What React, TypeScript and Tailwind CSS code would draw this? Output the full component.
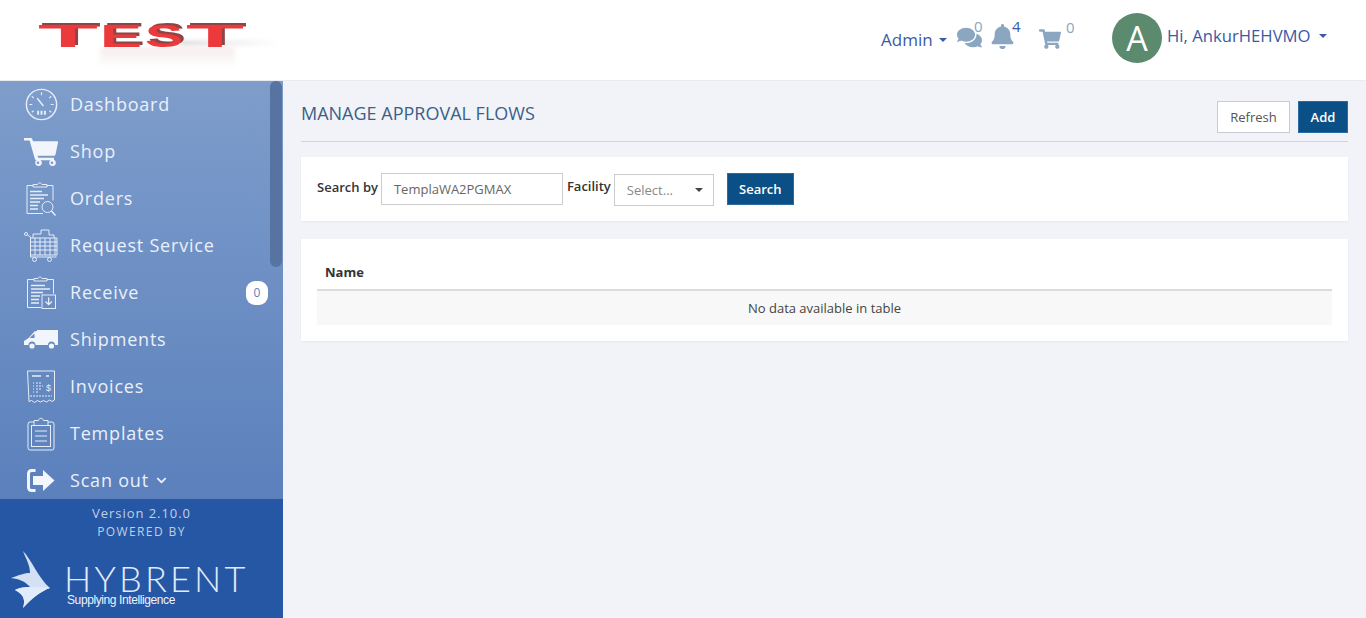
import React from "react";
import { FaComments, FaBell, FaShoppingCart, FaChevronDown } from "react-icons/fa";

const line = "#e6edf8";

function Gauge() {
  return (
    <svg width="33" height="33" viewBox="0 0 34 34" fill="none" stroke={line} strokeWidth="1.5">
      <circle cx="17" cy="17" r="15.6" />
      <path d="M17 4.5v3M7 8.5l2 2M27 8.5l-2 2M4.5 17h3M26.5 17h3M7 25l2-1.5M27 25l-2-1.5" strokeWidth="1.2" />
      <path d="M12.5 10.5l6.5 8" strokeWidth="1.6" />
      <path d="M12.5 23.5h2v4h-2zM16 23.5h2v4h-2zM19.5 23.5h2v4h-2z" fill={line} stroke="none" />
    </svg>
  );
}
function Cart() {
  return (
    <svg width="34" height="28" viewBox="0 0 34 28" fill="#f2f6fc">
      <path d="M0 0h6.5c1 0 1.6.5 1.9 1.4L9 3.2h24c.8 0 1.2.6 1 1.4l-2.5 12c-.2.8-.7 1.2-1.5 1.2H13.6l.5 2H30v2.4H12.4c-.8 0-1.3-.4-1.5-1.1L5.6 2.6H0z" />
      <path fillRule="evenodd" d="M14 21.5a3.3 3.3 0 110 6.5 3.3 3.3 0 010-6.5zm0 2a1.3 1.3 0 100 2.6 1.3 1.3 0 000-2.6zM28 21.5a3.3 3.3 0 110 6.5 3.3 3.3 0 010-6.5zm0 2a1.3 1.3 0 100 2.6 1.3 1.3 0 000-2.6z" />
    </svg>
  );
}
function Orders() {
  return (
    <svg width="32" height="34" viewBox="0 0 32 34" fill="none" stroke={line} strokeWidth="1">
      <path d="M8 3.5H2v28h16M22 3.5h6v15" />
      <path d="M8 5V2.5h4.5c.5-2 3.500-2 4.500 0H22V5z" />
      <path d="M5 9.500h12M5 13h18M5 16.500h14M5 20h10M5 23.500h8M5 27h8" strokeWidth="1.3" />
      <circle cx="22.500" cy="25" r="5.500" />
      <path d="M26.500 29l4 4.500" strokeWidth="1.500" />
    </svg>
  );
}
function RequestService() {
  return (
    <svg width="34" height="33" viewBox="0 0 34 33" fill="none" stroke={line} strokeWidth="1">
      <circle cx="2" cy="5" r="1.500" />
      <path d="M3.500 6l3 2v20h26M6 9h27v17H6M6 13h27M6 17h27M6 21h27M11 9v17M16 9v17M21 9v17M26 9v17M31 9v17" />
      <path d="M9 9V5h8V1h8v5h5v3" />
      <circle cx="10.500" cy="30.500" r="2" />
      <circle cx="25.500" cy="30.500" r="2" />
    </svg>
  );
}
function Receive() {
  return (
    <svg width="30" height="33" viewBox="0 0 30 33" fill="none" stroke={line} strokeWidth="1">
      <path d="M8 3.500H1.500v28H15M21 3.500h6.500v14" />
      <path d="M8 5V2.500h4c.5-2 3-2 4 0h5V5z" />
      <path d="M5 9.500h14M5 13h19M5 16.500h12M5 20h9M5 23.500h8M5 27h8" strokeWidth="1.300" />
      <rect x="16" y="19" width="13.500" height="13.500" />
      <path d="M22.700 21.500v7M19.500 25.500l3.200 3.200 3.200-3.200" strokeWidth="1.300" />
    </svg>
  );
}
function Truck() {
  return (
    <svg width="34" height="20" viewBox="0 0 34 20" fill="#f2f6fc">
      <path d="M13 0h21v15H31a3.500 3.500 0 00-7 0H11.500a3.500 3.500 0 00-7 0H0v-4l4-2.500L10.500 1.500 13 1zM5.500 8h5V3.500z" fillRule="evenodd" />
      <circle cx="8" cy="16" r="2.600" />
      <circle cx="27.500" cy="16" r="2.600" />
    </svg>
  );
}
function Invoice() {
  return (
    <svg width="30" height="34" viewBox="0 0 30 34" fill="none" stroke={line} strokeWidth="1">
      <path d="M1.500 1h27v29l-2.500 1.500-2.500-1.500-3 2-3-1.500-3 1.500-3-1.500-3 2-3-2-2.500 1z" />
      <path d="M6 6h9M20 6h3" strokeWidth="1.300" />
      <path d="M7 13h1M10 13h6M7 16h1M10 16h7M7 19h1M10 19h5M7 22h1M10 22h3M4 26h22" strokeWidth="1.100" strokeDasharray="2 1" />
      <text x="20" y="21" fontSize="9" fill={line} stroke="none" fontFamily="'Liberation Sans', sans-serif">$</text>
    </svg>
  );
}
function Clipboard() {
  return (
    <svg width="28" height="34" viewBox="0 0 28 34" fill="none" stroke={line} strokeWidth="1">
      <rect x="1" y="5" width="26" height="28" rx="2" />
      <rect x="4.500" y="8.500" width="19" height="21" />
      <path d="M7 6.500V3.500h4.500c.5-3 4.500-3 5 0H21v5H7z" fill="#6688c0" />
      <path d="M8 14h12M8 19h12M8 24h12" strokeWidth="1.200" />
    </svg>
  );
}
function ScanOut() {
  return (
    <svg width="28" height="23" viewBox="0 0 28 23" fill="#f2f6fc">
      <path d="M8.500 1.500H4.500A3 3 0 001.500 4.500v14a3 3 0 003 3h4" fill="none" stroke="#f2f6fc" strokeWidth="3" />
      <path d="M6 7h10V1l11.500 10.500L16 22v-6H6z" />
    </svg>
  );
}

const items: { label: string; icon: React.ReactNode; badge?: string; chevron?: boolean }[] = [
  { label: "Dashboard", icon: <Gauge /> },
  { label: "Shop", icon: <Cart /> },
  { label: "Orders", icon: <Orders /> },
  { label: "Request Service", icon: <RequestService /> },
  { label: "Receive", icon: <Receive />, badge: "0" },
  { label: "Shipments", icon: <Truck /> },
  { label: "Invoices", icon: <Invoice /> },
  { label: "Templates", icon: <Clipboard /> },
  { label: "Scan out", icon: <ScanOut />, chevron: true },
];

function Caret({ cls }: { cls: string }) {
  return <span className={`inline-block w-0 h-0 border-x-4 border-x-transparent border-t-4 ${cls}`} />;
}

function Logo() {
  const letters: [string, number, number][] = [
    ["T", 38, 60],
    ["E", 100, 42],
    ["S", 145, 38],
    ["T", 186, 58],
  ];
  return (
    <div className="w-[283px] h-[80px] shrink-0 relative overflow-hidden">
      <div className="absolute left-[100px] top-[48px] w-[135px] h-[20px] bg-gradient-to-b from-[#f7ecec] to-white blur-[2px]" />
      <div className="absolute left-[180px] top-[41px] w-[100px] h-[4px] bg-gradient-to-r from-[#d9d3d3] to-white blur-[2px]" />
      <svg
        className="absolute left-0 top-0 drop-shadow-[3px_-2px_0_#8f4545]"
        width="283"
        height="80"
        viewBox="0 0 283 80"
        fontFamily="'Liberation Sans', sans-serif"
        fontWeight="700"
        fontSize="32"
      >
        {letters.map(([c, x, w]) => (
          <text key={x} x={x} y={47} textLength={w} lengthAdjust="spacingAndGlyphs" fill="#ec3a3c">{c}</text>
        ))}
      </svg>
    </div>
  );
}

function Bird() {
  return (
    <svg width="40" height="58" viewBox="0 0 40 58" className="shrink-0">
      <path fill="#d3e0f6" d="M12 0C20 8 28 28 39 37C30 40 20 48 12 57C14 50 14 44 4 39C10 36 15 36 19 36C14 30 8 28 0 27C8 24 14 22 19 22C19 14 15 8 12 0Z" />
      <path fill="#e2ebfa" d="M19 36C24 36 32 36 39 37C30 40 20 48 12 57C14 50 14 44 4 39C10 36 15 36 19 36Z" />
    </svg>
  );
}

export default function App() {
  return (
    <div className="h-[618px] overflow-hidden flex flex-col bg-[#f1f3f8] font-['Open_Sans',sans-serif]">
      <header className="h-[81px] shrink-0 bg-white border-b border-[#e9ebef] flex">
        <Logo />
        <div className="flex-1 relative">
          <div className="absolute left-[598px] top-[29px] text-[17px] leading-[22px] text-[#3a5aa5] flex items-center gap-[6px]">
            Admin <Caret cls="border-t-[#3a5aa5]" />
          </div>
          <FaComments className="absolute left-[674px] top-[25px] text-[#8aa6c1]" size={25} />
          <span className="absolute left-[691px] top-[17px] text-[15px] leading-[19px] text-[#8aa6c1]">0</span>
          <FaBell className="absolute left-[707px] top-[24px] text-[#8aa6c1]" size={25} />
          <span className="absolute left-[729px] top-[17px] text-[15px] leading-[19px] text-[#3a5aa5]">4</span>
          <FaShoppingCart className="absolute left-[756px] top-[28px] text-[#8aa6c1]" size={22} />
          <span className="absolute left-[783px] top-[18px] text-[15px] leading-[19px] text-[#8aa6c1]">0</span>
          <div className="absolute left-[829px] top-[13px] w-[50px] h-[50px] rounded-full bg-[#5c8a6e] text-white text-[34px] leading-[50px] text-center">A</div>
          <div className="absolute left-[884px] top-[25px] text-[16.7px] leading-[22px] text-[#3a5aa5] flex items-center gap-[8px]">
            Hi, AnkurHEHVMO <Caret cls="border-t-[#3a5aa5]" />
          </div>
        </div>
      </header>

      <div className="flex flex-1 min-h-0">
        <aside className="w-[283px] shrink-0 flex flex-col">
          <nav className="h-[418px] relative overflow-hidden bg-gradient-to-b from-[#7e9dcb] to-[#5b80bc]">
            {items.map((it) => (
              <div key={it.label} className="h-[47px] flex items-center relative">
                <div className="w-[70px] shrink-0 pl-[24px] flex items-center">
                  <div className="w-[34px] flex justify-center">{it.icon}</div>
                </div>
                <span className="text-[18px] leading-[24px] tracking-[0.8px] text-[#eaf0f9] flex items-center -translate-y-px">
                  {it.label}
                  {it.chevron && <FaChevronDown className="ml-[7px] mt-[2px]" size={11} />}
                </span>
                {it.badge && (
                  <span className="absolute left-[246px] top-[12px] w-[22px] h-[24px] rounded-[9px] bg-white text-[#5b80bc] text-[12px] font-medium leading-[24px] text-center">
                    {it.badge}
                  </span>
                )}
              </div>
            ))}
            <div className="absolute left-[270px] top-0 w-[12px] h-[186px] rounded-[6px] bg-[#5673a2]" />
          </nav>
          <div className="flex-1 bg-[#2657a5] flex flex-col items-center relative">
            <div className="mt-[6px] text-[13px] leading-[17px] tracking-[0.95px] text-[#c2cfe3]">Version 2.10.0</div>
            <div className="mt-[1px] text-[12px] leading-[17px] tracking-[1.4px] text-[#c2cfe3]">POWERED BY</div>
            <div className="absolute left-[11px] top-[52px]"><Bird /></div>
            <div className="absolute left-[64px] top-[64px] text-[36px] leading-[30px] tracking-[3.2px] font-['Lato',sans-serif] font-light text-[#e2ebfa]">HYBRENT</div>
            <div className="absolute left-[67px] top-[94px] text-[12px] leading-[14px] tracking-[-0.4px] font-['Liberation_Sans',sans-serif] text-[#eef3fc]">Supplying Intelligence</div>
          </div>
        </aside>

        <main className="flex-1 px-[18px] min-w-0">
          <div className="h-[61px] border-b border-[#d2d4d9] flex items-start justify-between">
            <h1 className="mt-[20px] text-[18px] leading-[25px] text-[#3b5f8a]">MANAGE APPROVAL FLOWS</h1>
            <div className="mt-[20px] flex gap-[8px]">
              <button className="w-[73px] h-[32px] pt-[2px] bg-white border border-[#c9cbd0] text-[13px] text-[#555]">Refresh</button>
              <button className="w-[50px] h-[32px] pt-[2px] bg-[#0a5086] border border-[#2a6ba6] text-[13px] font-semibold text-white">Add</button>
            </div>
          </div>

          <section className="mt-[15px] h-[64px] bg-white shadow-[0_1px_2px_rgba(0,0,0,0.05)] flex items-start pl-[16px]">
            <label className="mt-[21px] text-[13px] leading-[18px] font-semibold text-[#333]">Search by</label>
            <div className="ml-[3px] mt-[16px] w-[182px] h-[32px] border border-[#cccccc] text-[13px] leading-[30px] pl-[12px] text-[#666]">TemplaWA2PGMAX</div>
            <label className="ml-[4px] mt-[20px] text-[13px] leading-[18px] font-semibold text-[#333]">Facility</label>
            <div className="ml-[3px] mt-[17px] w-[100px] h-[32px] border border-[#cccccc] text-[13px] leading-[30px] pl-[12px] pr-[10px] text-[#888] flex items-center justify-between">
              Select... <Caret cls="border-t-[#444]" />
            </div>
            <button className="ml-[13px] mt-[16px] w-[67px] h-[32px] pt-[2px] bg-[#0a5086] border border-[#2a6ba6] text-[13px] font-semibold text-white">Search</button>
          </section>

          <section className="mt-[18px] h-[102px] bg-white shadow-[0_1px_2px_rgba(0,0,0,0.05)] px-[16px] pt-[16px]">
            <div className="h-[36px] border-b-2 border-[#dcdcdc] pl-[8px] text-[13px] leading-[35px] font-bold text-[#333]">Name</div>
            <div className="h-[34px] bg-[#f8f8f8] text-center text-[13px] leading-[34px] text-[#444]">No data available in table</div>
          </section>
        </main>
      </div>
    </div>
  );
}
